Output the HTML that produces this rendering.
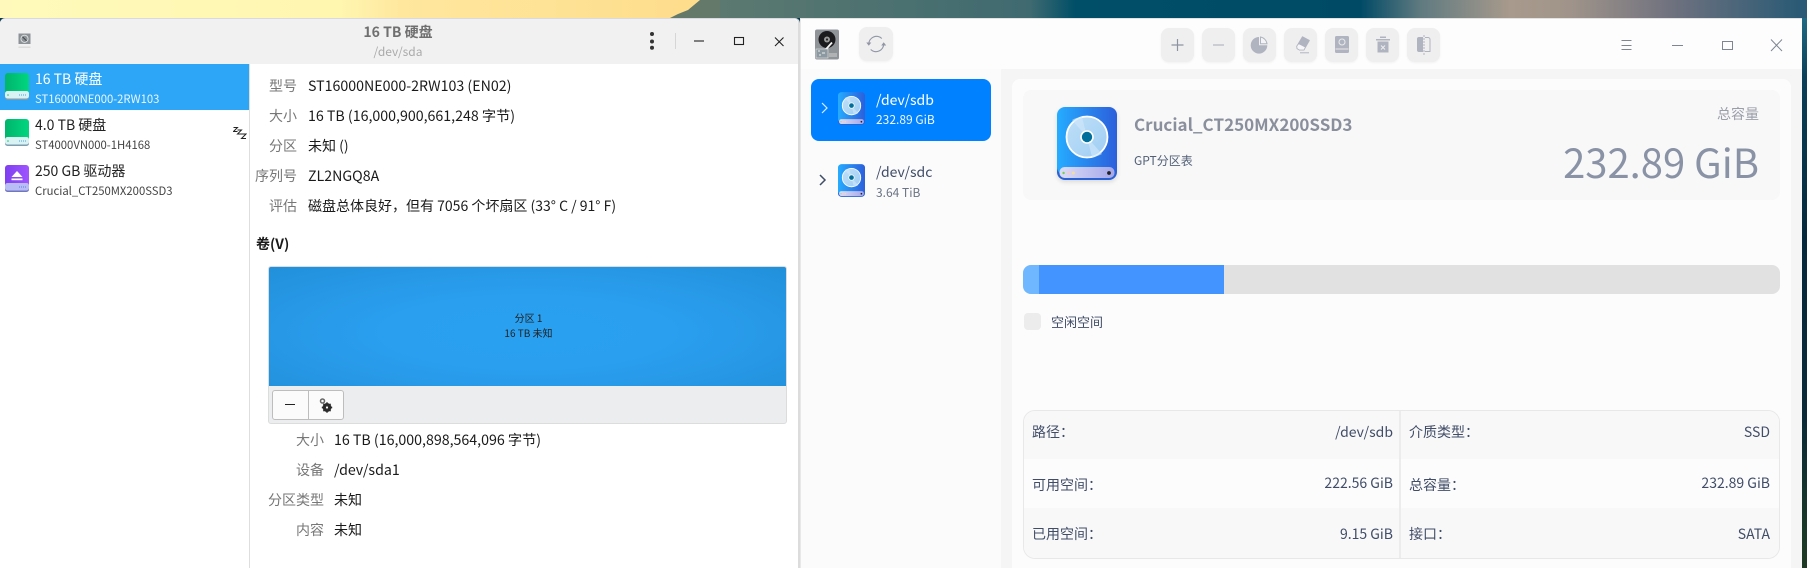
<!DOCTYPE html>
<html lang="zh-CN"><head><meta charset="utf-8"><title>Disks</title>
<style>
*{box-sizing:border-box;margin:0;padding:0}
html,body{width:1807px;height:568px;overflow:hidden;background:#0a3a4e}
body{position:relative;font-family:"Noto Sans CJK SC","Liberation Sans",sans-serif;font-size:14px;color:#1a1a1a}
.a{position:absolute}
.t{position:absolute;line-height:20px;height:20px;white-space:nowrap}
.r{text-align:right}
.l{color:#777;width:90px;text-align:right}
.s{font-size:12px}
.x{font-size:11.3px}
.w{font-size:14.2px}
.d{color:#414d68}
.btn{position:absolute;top:28px;width:33px;height:34px;background:#efefef;border-radius:8px;box-shadow:0 1px 2px rgba(0,0,0,.05);}
.btn svg{position:absolute;left:0;top:0}
</style></head><body>
<!-- wallpaper -->
<div class="a" style="left:0;top:0;width:1807px;height:18px;background:linear-gradient(90deg,#fffabb 0,#fff6b0 340px,#ffe79e 400px,#fedd8c 700px,#5d7a70 700px,#3f6a70 1030px,#004f68 1075px,#004a66 1360px,#5f7a80 1420px,#a89a8c 1510px,#a0948a 1570px,#70727f 1670px,#2a5a75 1800px)"></div>
<svg class="a" style="left:660px;top:0" width="60" height="18"><polygon points="10,18 18,14 28,10 40,0 60,0 60,18" fill="#64796a"/></svg>
<div class="a" style="left:1802px;top:18px;width:5px;height:550px;background:linear-gradient(180deg,#1f6a84 0,#0a4058 60px,#05293c 220px,#0a2a38 400px,#1a3a28 520px,#223a20 568px)"></div>

<!-- LEFT WINDOW -->
<div class="a" style="left:0;top:18px;width:800px;height:550px;background:#fff;border-top:1px solid #d9d9e2;border-right:2px solid #dcdcdc;border-radius:5px 5px 0 0;overflow:hidden"></div>
<div class="a" style="left:0;top:19px;width:798px;height:45px;background:#f1f1f1;border-radius:5px 5px 0 0"></div>
<svg class="a" style="left:18px;top:33px" width="13" height="16" viewBox="0 0 13 16"><rect width="12" height="10.5" y=".5" x=".5" fill="#8c9296"/><circle cx="6.500" cy="5.800" r="3.600" fill="none" stroke="#dfe2e3" stroke-width=".9"/><path d="M4.500 3.800l4 4" stroke="#3b4044" stroke-width="1"/><rect x=".5" y="13.500" width="12" height="1.500" fill="#dcdcdc"/></svg>
<div class="t" style="left:298px;width:200px;top:22px;text-align:center;font-weight:700;color:#6f6f6f;font-size:14px">16 TB 硬盘</div>
<div class="t s" style="left:298px;width:200px;top:42px;text-align:center;color:#aaa">/dev/sda</div>
<svg class="a" style="left:640px;top:28px" width="160" height="30"><circle cx="12" cy="6" r="2" fill="#333"/><circle cx="12" cy="13.500" r="2" fill="#333"/><circle cx="12" cy="19.800" r="2" fill="#333"/><path d="M35.500 5v16" stroke="#d6d6d6"/><path d="M54 13h10" stroke="#222" stroke-width="1.100"/><rect x="94.500" y="9.500" width="9" height="7" fill="none" stroke="#222" stroke-width="1.100"/><path d="M135 9.500l8.500 8.500M143.500 9.500l-8.500 8.500" stroke="#222" stroke-width="1.100"/></svg>
<!-- left sidebar -->
<div class="a" style="left:249px;top:64px;width:1px;height:504px;background:#dedede"></div>
<div class="a" style="left:0;top:64px;width:249px;height:46px;background:#2da6f7"></div>
<svg width="0" height="0" style="position:absolute"><defs>
<linearGradient id="g" x1="0" x2="1" y1="0" y2="0"><stop offset="0" stop-color="#00b56c"/><stop offset="1" stop-color="#00d67f"/></linearGradient>
<linearGradient id="p" x1="0" x2="1" y1="0" y2="0"><stop offset="0" stop-color="#7e3ff0"/><stop offset="1" stop-color="#a055ff"/></linearGradient>
<linearGradient id="b" x1="0" x2="1" y1="0" y2="0"><stop offset="0" stop-color="#25acff"/><stop offset="1" stop-color="#2c5fdc"/></linearGradient>
<linearGradient id="st" x1="0" x2="1" y1="0" y2="0"><stop offset="0" stop-color="#dcdcf7"/><stop offset="1" stop-color="#a5a8ea"/></linearGradient>
<linearGradient id="ds" x1="0" x2="1" y1="0" y2="1"><stop offset="0" stop-color="#bfe0f8"/><stop offset="1" stop-color="#9fcdf3"/></linearGradient>
<symbol id="gd" viewBox="0 0 24 27"><rect x="0" y="0" width="24" height="26" rx="3" fill="url(#g)"/><rect x="0" y="19" width="24" height="8" rx="2.500" fill="#7d9fb0"/><rect x="0" y="18" width="24" height="7.500" rx="2.500" fill="#d9f2f4"/><circle cx="3" cy="22" r=".8" fill="#22c66e"/><path d="M14 22h7" stroke="#47a5d8" stroke-width="1" stroke-dasharray="1 1"/></symbol>
<symbol id="pd" viewBox="0 0 24 27"><rect x="0" y="0" width="24" height="26" rx="3" fill="url(#p)"/><rect x="0" y="19" width="24" height="8" rx="2.500" fill="#6f77c0"/><rect x="0" y="18" width="24" height="7.500" rx="2.500" fill="#b9bdf5"/><path d="M12 6l5.500 6h-11z" fill="#fff"/><rect x="6.500" y="13.500" width="11" height="1.700" fill="#fff"/><path d="M14 22h7" stroke="#5a80e0" stroke-width="1" stroke-dasharray="1 1"/></symbol>
<symbol id="bd" viewBox="0 0 60 73"><rect x="0" y="2" width="60" height="71" rx="8" fill="#2a62d4"/><rect x="0" y="0" width="60" height="68" rx="8" fill="url(#b)"/><circle cx="30" cy="30" r="20.500" fill="url(#ds)" stroke="#fff" stroke-width="1.800"/><path d="M30 30L15 13a21 21 0 0 1 10-3zM30 30L45 47a21 21 0 0 1-10 3z" fill="#d2e8fa" opacity=".6"/><circle cx="30" cy="30" r="6.800" fill="#fff"/><circle cx="30" cy="30" r="5.200" fill="#006f9b"/><rect x="2.500" y="60" width="55" height="11" rx="5" fill="url(#st)"/><circle cx="6.600" cy="66" r="1.200" fill="#7ad04a"/><circle cx="11.600" cy="66" r="1.500" fill="#f3c9cf"/><circle cx="16.300" cy="66" r="1.500" fill="#f2dfa0"/><circle cx="52" cy="66" r="1.900" fill="#222"/></symbol>
</defs></svg>
<svg class="a" style="left:5px;top:73px" width="24" height="27"><use href="#gd"/></svg>
<svg class="a" style="left:5px;top:119px" width="24" height="27"><use href="#gd"/></svg>
<svg class="a" style="left:5px;top:165px" width="24" height="27"><use href="#pd"/></svg>
<div class="t" style="left:35px;top:69px;color:#fff">16 TB 硬盘</div>
<div class="t x" style="left:35px;top:89px;color:#eaf6ff">ST16000NE000-2RW103</div>
<div class="t" style="left:35px;top:115px;color:#222">4.0 TB 硬盘</div>
<div class="t x" style="left:35px;top:135px;color:#444">ST4000VN000-1H4168</div>
<div class="t" style="left:35px;top:161px;color:#222">250 GB 驱动器</div>
<div class="t x" style="left:35px;top:181px;color:#444">Crucial_CT250MX200SSD3</div>
<svg class="a" style="left:233px;top:126px" width="14" height="14" fill="none" stroke="#222" stroke-width="1"><path d="M.5 1.500h4l-4 4h4M4.500 4h4l-4 4h4M8.500 8h4.500l-4.500 4.500h4.500"/></svg>
<!-- info -->
<div class="t l" style="left:207px;top:76px">型号</div><div class="t w" style="left:308px;top:76px">ST16000NE000-2RW103 (EN02)</div>
<div class="t l" style="left:207px;top:106px">大小</div><div class="t w" style="left:308px;top:106px">16 TB (16,000,900,661,248 字节)</div>
<div class="t l" style="left:207px;top:136px">分区</div><div class="t" style="left:308px;top:136px">未知 ()</div>
<div class="t l" style="left:207px;top:166px">序列号</div><div class="t w" style="left:308px;top:166px">ZL2NGQ8A</div>
<div class="t l" style="left:207px;top:196px">评估</div><div class="t" style="left:308px;top:196px">磁盘总体良好，但有 7056 个坏扇区 (33° C / 91° F)</div>
<div class="t" style="left:256px;top:234px;font-weight:700">卷(V)</div>
<div class="a" style="left:268px;top:266px;width:519px;height:158px;background:#ecedef;border:1px solid #dcdcdc;border-radius:3px;overflow:hidden"><div style="height:119px;background:radial-gradient(ellipse at 50% 55%,#2aa0f0 0,#2a9fef 40%,#2290db 100%)"></div></div>
<div class="t" style="left:269px;width:519px;top:308px;text-align:center;font-size:10px;color:#222">分区 1</div>
<div class="t" style="left:269px;width:519px;top:323px;text-align:center;font-size:10px;color:#222">16 TB 未知</div>
<div class="a" style="left:272px;top:390px;width:72px;height:30px;background:#fbfbfb;border:1px solid #bdbdbd;border-radius:3px"></div>
<div class="a" style="left:308px;top:390px;width:1px;height:30px;background:#bdbdbd"></div>
<div class="a" style="left:285px;top:404px;width:10px;height:1.300px;background:#222"></div>
<svg class="a" style="left:319px;top:397px" width="16" height="17" viewBox="0 0 16 17"><circle cx="3.500" cy="4" r="2" fill="none" stroke="#666" stroke-width="1.500"/><circle cx="8" cy="10.500" r="3.200" fill="none" stroke="#2b2b2b" stroke-width="2.600"/><path d="M8 5.300v10.400M2.800 10.500h10.400M4.400 6.900l7.200 7.200M11.600 6.900l-7.200 7.200" stroke="#2b2b2b" stroke-width="1.400"/><circle cx="8" cy="10.500" r="1.100" fill="#fbfbfb"/></svg>
<div class="t l" style="left:234px;top:430px">大小</div><div class="t w" style="left:334px;top:430px">16 TB (16,000,898,564,096 字节)</div>
<div class="t l" style="left:234px;top:460px">设备</div><div class="t w" style="left:334px;top:460px">/dev/sda1</div>
<div class="t l" style="left:234px;top:490px">分区类型</div><div class="t" style="left:334px;top:490px">未知</div>
<div class="t l" style="left:234px;top:520px">内容</div><div class="t" style="left:334px;top:520px">未知</div>

<!-- RIGHT WINDOW -->
<div class="a" style="left:800px;top:18px;width:1002px;height:550px;background:#f5f5f5;border-top:1px solid #e3e3e3;border-left:1px solid #e8e8e8"></div>
<div class="a" style="left:801px;top:19px;width:1001px;height:50px;background:#fdfdfd"></div>
<div class="a" style="left:801px;top:69px;width:200px;height:499px;background:#fbfbfb"></div>
<div class="a" style="left:1012px;top:79px;width:779px;height:489px;background:#fcfcfc;border-radius:8px 8px 0 0"></div>
<!-- app icon -->
<svg class="a" style="left:815px;top:29px" width="24" height="31" viewBox="0 0 24 31"><rect width="24" height="30" y=".5" rx="2" fill="#8f9499"/><circle cx="12" cy="10.500" r="8.500" fill="#1b1b1d"/><circle cx="12" cy="10.500" r="3" fill="#9a9a9a"/><circle cx="12" cy="10.500" r="1.100" fill="#222"/><path d="M17 13.500L9 22.500" stroke="#f5f5f5" stroke-width="1.800"/><rect x="1" y="20" width="12" height="9" fill="#8c99a0" stroke="#e8e8e8" stroke-width=".6"/><path d="M3 22h2M7 24h3M4 26h2" stroke="#eee" stroke-width="1"/><path d="M15 24v4M17 24v4M19 24v4M21 24v4" stroke="#d0d0d0" stroke-width="1"/></svg>
<div class="btn" style="left:859px;top:27px;width:34px"><svg width="34" height="34" viewBox="0 0 34 34" fill="none" stroke="#8f96a5" stroke-width="1.200"><path d="M9.800 17a7.700 7.700 0 0 1 13-5.500"/><path d="M24.700 17a7.700 7.700 0 0 1-13 5.500"/><path d="M7.300 15.500h5l-2.500 3.200zM27.200 18.500h-5l2.500-3.200z" fill="#8f96a5" stroke="none"/></svg></div>
<!-- toolbar -->
<div class="btn" style="left:1161px"><svg width="33" height="34" fill="none" stroke="#8d93a0" stroke-width="1.200"><path d="M16.500 11v12M10.500 17h12"/></svg></div>
<div class="btn" style="left:1202px"><svg width="33" height="34" fill="none" stroke="#b2b6c0" stroke-width="1.200"><path d="M11 17h11"/></svg></div>
<div class="btn" style="left:1243px"><svg width="33" height="34" viewBox="0 0 33 34"><path d="M16 9a8.300 8.300 0 1 0 8.300 8.300H16z" fill="#b0b4c0"/><path d="M17.500 9v6.700h6.500A8 8 0 0 0 17.500 9z" fill="#f4f4f6" stroke="#b0b4c0" stroke-width="1"/></svg></div>
<div class="btn" style="left:1284px"><svg width="33" height="34" viewBox="0 0 33 34"><path d="M18.500 8.800l6.800 3.700l-3.800 6.600l-7-3.600z" fill="#b0b4c0" stroke="#b0b4c0" stroke-linejoin="round"/><path d="M14.500 15.500l7 3.600l-1.500 3h-4.500l-2.500-1.500l-.3-2.300z" fill="#f6f6f8" stroke="#b0b4c0" stroke-width=".9" stroke-linejoin="round"/><path d="M16 24.800h9" stroke="#b0b4c0" stroke-width="1"/></svg></div>
<div class="btn" style="left:1325px"><svg width="33" height="34" viewBox="0 0 33 34"><rect x="10" y="8" width="14" height="17" rx="1.500" fill="#b0b4c0"/><circle cx="17" cy="14" r="3" fill="none" stroke="#e8e8e8" stroke-width="1.100"/><rect x="10.500" y="20.500" width="13" height="1" fill="#e8e8e8"/></svg></div>
<div class="btn" style="left:1366px"><svg width="33" height="34" viewBox="0 0 33 34"><rect x="14" y="8.500" width="6" height="1.500" fill="#b0b4c0"/><rect x="10" y="11" width="14" height="1.500" fill="#b0b4c0"/><rect x="11.500" y="13.500" width="11" height="11" fill="#b0b4c0"/><path d="M15 17.500l4 4M19 17.500l-4 4" stroke="#eee" stroke-width="1"/></svg></div>
<div class="btn" style="left:1407px"><svg width="33" height="34" viewBox="0 0 33 34"><path d="M10 11a2 2 0 0 1 2-2h4v15h-4a2 2 0 0 1-2-1.500z" fill="#b0b4c0"/><path d="M18 9.500h3a2 2 0 0 1 2 2v12h-5" fill="none" stroke="#b0b4c0" stroke-width="1"/><path d="M17 7v20" stroke="#b0b4c0" stroke-width="1" stroke-dasharray="2 1"/></svg></div>
<!-- window ctl -->
<svg class="a" style="left:1615px;top:30px" width="180" height="30" fill="none" stroke="#7e8694" stroke-width="1"><path d="M6.500 10.500h10M6.500 15.500h10M6.500 19.500h10"/><path d="M57 15.500h11"/><rect x="107.500" y="11.500" width="10" height="8"/><path d="M156 9.500l11 11.500M167 9.500l-11 11.500"/></svg>
<!-- device list -->
<div class="a" style="left:811px;top:79px;width:180px;height:62px;background:#0081ff;border-radius:8px"></div>
<svg class="a" style="left:820px;top:100px" width="10" height="16" fill="none" stroke="#dcecff" stroke-width="1.200"><path d="M2 3l5 5l-5 5"/></svg>
<svg class="a" style="left:838px;top:92px" width="27" height="33"><use href="#bd"/></svg>
<div class="t" style="left:876px;top:90px;color:#fff">/dev/sdb</div>
<div class="t s" style="left:876px;top:110px;color:#eef6ff">232.89 GiB</div>
<svg class="a" style="left:818px;top:172px" width="10" height="16" fill="none" stroke="#414d68" stroke-width="1.500"><path d="M2 3l5 5l-5 5"/></svg>
<svg class="a" style="left:838px;top:164px" width="27" height="33"><use href="#bd"/></svg>
<div class="t d" style="left:876px;top:162px">/dev/sdc</div>
<div class="t s" style="left:876px;top:183px;color:#6b7486">3.64 TiB</div>
<!-- card -->
<div class="a" style="left:1023px;top:90px;width:757px;height:110px;background:#f8f8f8;border-radius:8px"></div>
<svg class="a" style="left:1057px;top:107px;filter:drop-shadow(0 2px 2px rgba(0,0,0,.12))" width="60" height="73"><use href="#bd"/></svg>
<div class="t" style="left:1134px;top:114px;font-weight:700;font-size:17px;color:#8a8f9d">Crucial_CT250MX200SSD3</div>
<div class="t s" style="left:1134px;top:151px;color:#526077">GPT分区表</div>
<div class="t r" style="left:1600px;width:159px;top:104px;color:#9a9ea9">总容量</div>
<div class="t r" style="left:1450px;width:309px;top:131px;height:60px;line-height:60px;font-size:40px;color:#8a93a6">232.89 GiB</div>
<!-- bar -->
<div class="a" style="left:1023px;top:265px;width:757px;height:29px;background:#e1e1e1;border-radius:8px;overflow:hidden"><div class="a" style="left:0;top:0;width:16px;height:29px;background:#6fb8ff"></div><div class="a" style="left:16px;top:0;width:185px;height:29px;background:#4394ff"></div></div>
<div class="a" style="left:1024px;top:313px;width:17px;height:17px;background:#ececec;border-radius:4px"></div>
<div class="t d" style="left:1051px;top:312px;font-size:13px">空闲空间</div>
<!-- table -->
<div class="a" style="left:1023px;top:410px;width:757px;height:149px;border:1px solid #e8e8e8;border-radius:12px;overflow:hidden;background:#fcfcfc"><div style="height:48px;background:#f8f8f8"></div><div style="height:49px"></div><div style="height:51px;background:#f8f8f8"></div><div class="a" style="left:375px;top:0;width:2px;height:149px;background:#ececec"></div></div>
<div class="t d" style="left:1032px;top:422px">路径：</div><div class="t d r" style="left:1250px;width:143px;top:422px">/dev/sdb</div>
<div class="t d" style="left:1409px;top:422px">介质类型：</div><div class="t d r" style="left:1627px;width:143px;top:422px">SSD</div>
<div class="t d" style="left:1032px;top:475px">可用空间：</div><div class="t d r" style="left:1250px;width:143px;top:473px">222.56 GiB</div>
<div class="t d" style="left:1409px;top:475px">总容量：</div><div class="t d r" style="left:1627px;width:143px;top:473px">232.89 GiB</div>
<div class="t d" style="left:1032px;top:524px">已用空间：</div><div class="t d r" style="left:1250px;width:143px;top:524px">9.15 GiB</div>
<div class="t d" style="left:1409px;top:524px">接口：</div><div class="t d r" style="left:1627px;width:143px;top:524px">SATA</div>
</body></html>
